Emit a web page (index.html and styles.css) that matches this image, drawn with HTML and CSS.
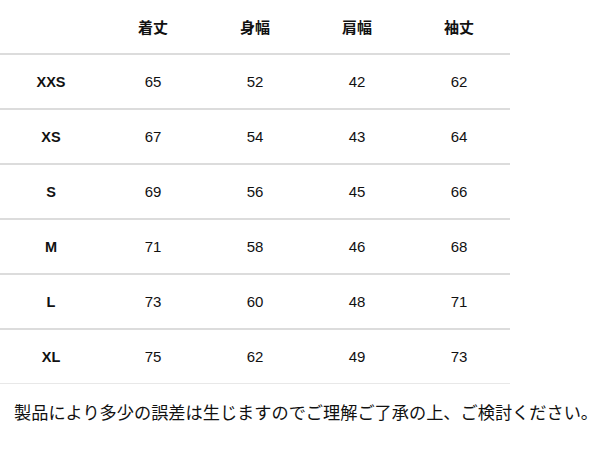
FILE: index.html
```html
<!DOCTYPE html>
<html lang="ja">
<head>
<meta charset="utf-8">
<link rel="stylesheet" href="styles.css">
</head>
<body>
<table class="size-table">
  <thead>
    <tr><th></th><th>着丈</th><th>身幅</th><th>肩幅</th><th>袖丈</th></tr>
  </thead>
  <tbody>
    <tr><th>XXS</th><td>65</td><td>52</td><td>42</td><td>62</td></tr>
    <tr><th>XS</th><td>67</td><td>54</td><td>43</td><td>64</td></tr>
    <tr><th>S</th><td>69</td><td>56</td><td>45</td><td>66</td></tr>
    <tr><th>M</th><td>71</td><td>58</td><td>46</td><td>68</td></tr>
    <tr><th>L</th><td>73</td><td>60</td><td>48</td><td>71</td></tr>
    <tr class="last"><th>XL</th><td>75</td><td>62</td><td>49</td><td>73</td></tr>
  </tbody>
</table>
<p class="note">製品により多少の誤差は生じますのでご理解ご了承の上、ご検討ください。</p>
</body>
</html>
```
FILE: styles.css
```css
html, body {
  margin: 0;
  padding: 0;
  background: #fff;
}
body {
  font-family: "Liberation Sans", Arial, "Noto Sans CJK JP", sans-serif;
  color: #111;
}
.size-table {
  border-collapse: collapse;
  width: 510px;
  table-layout: fixed;
}
.size-table th,
.size-table td {
  width: 102px;
  height: 53px;
  padding: 0;
  text-align: center;
  vertical-align: middle;
  font-size: 15px;
  border-bottom: 2px solid #dcdcdc;
}
.size-table th {
  font-weight: bold;
  font-size: 14.5px;
}
.size-table thead th {
  font-family: "Noto Sans CJK JP", sans-serif;
  font-size: 15px;
  font-weight: bold;
}
.size-table td {
  font-weight: normal;
}
.size-table .last th,
.size-table .last td {
  border-bottom: 1px solid #e8e8e8;
}
.note {
  margin: 16px 0 0 14px;
  font-family: "Noto Sans CJK JP", sans-serif;
  font-size: 17.2px;
  line-height: 24px;
  color: #111;
  white-space: nowrap;
}
```
